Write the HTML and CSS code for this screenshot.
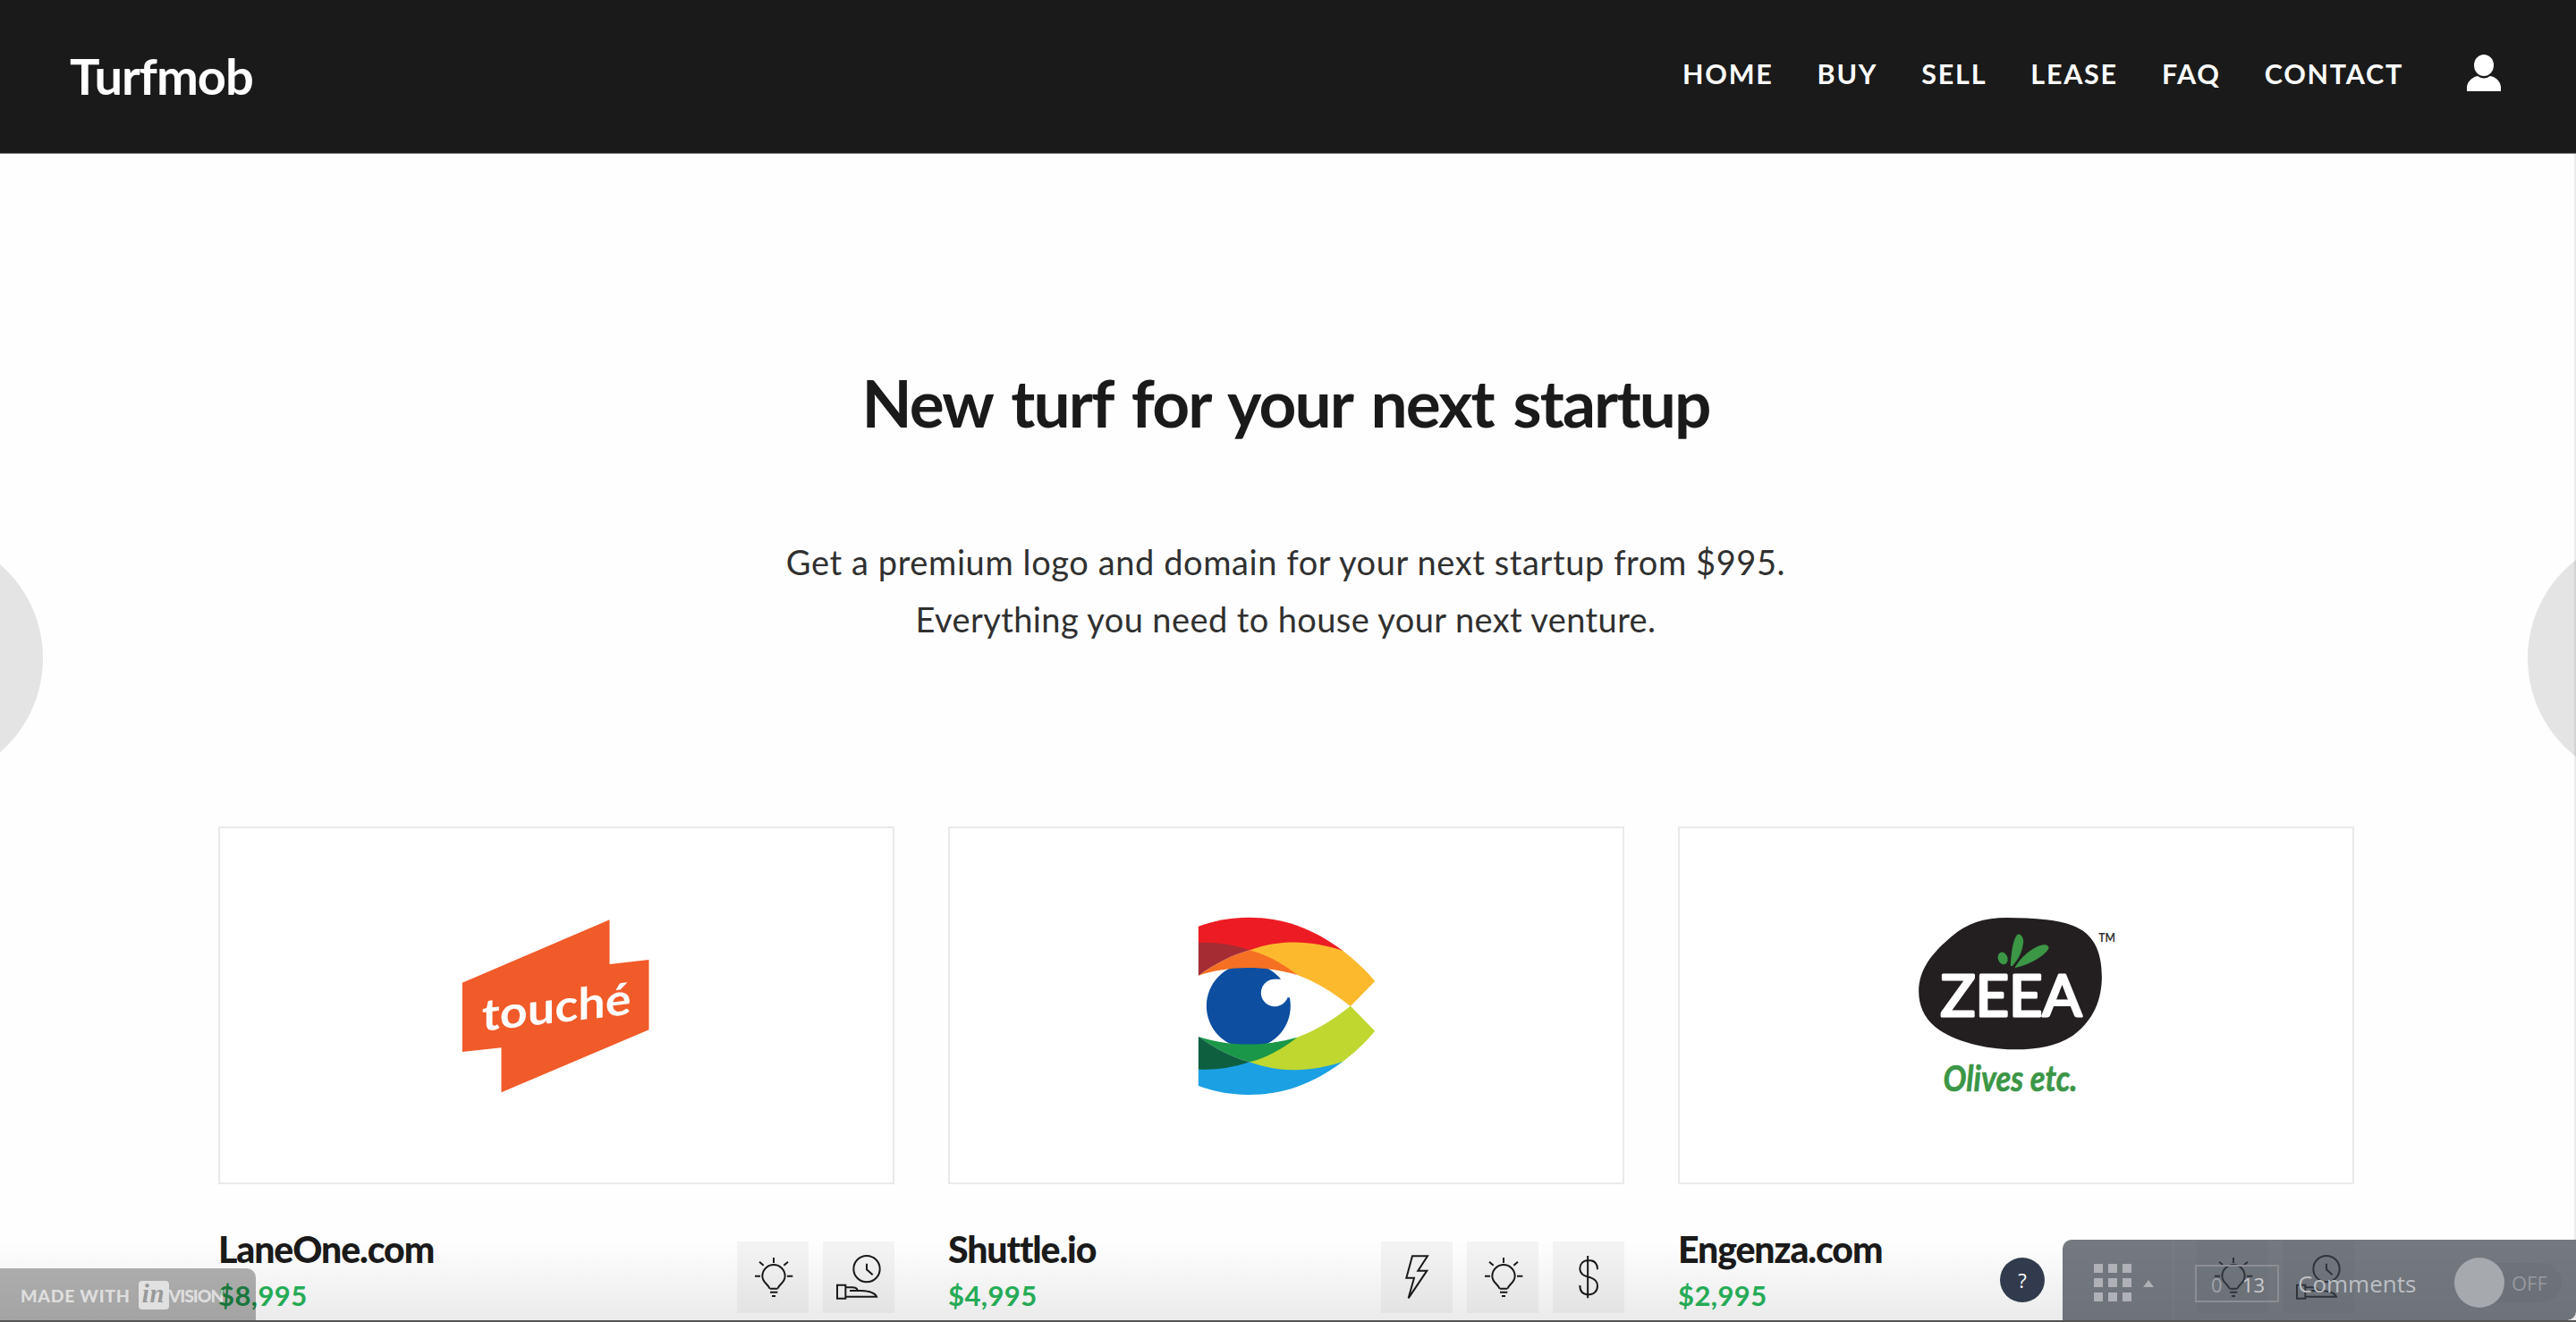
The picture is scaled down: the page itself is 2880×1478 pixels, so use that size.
FILE: index.html
```html
<!DOCTYPE html>
<html lang="en">
<head>
<meta charset="utf-8">
<title>Turfmob</title>
<link rel="stylesheet" href="styles.css">
</head>
<body>
<svg class="defs" aria-hidden="true">
  <symbol id="bulb" viewBox="0 0 240 240">
    <path d="M123 54v18M60 116h18M168 116h19M75 68l14 12M171 68l-14 12M110 158h26M111 170h25M117 183h12M109 158C107 145 85 138 85 116A38 38 0 0 1 161 116C161 138 139 145 137 158"/>
  </symbol>
  <symbol id="clock" viewBox="0 0 240 240">
    <circle cx="147" cy="92" r="44"/>
    <path d="M147 74v20l20 18M48 146h28v45H48zM76 154h22q14 0 18 8M90 165h38q45 2 52 20H76"/>
  </symbol>
  <symbol id="bolt" viewBox="0 0 240 240">
    <path d="M105 49H156L124 98H154L92 190L111 122H85Z"/>
  </symbol>
  <symbol id="dollar" viewBox="0 0 240 240">
    <path d="M117.500 48V190M150 94C150 72 137 63 120 63C102 63 91 75 91 91C91 108 105 116 120 119C138 123 150 132 150 149C150 167 137 178 120 178C102 178 91 167 91 147"/>
  </symbol>
</svg>

<header class="header">
  <a class="brand">Turfmob</a>
  <nav class="nav">
    <a>HOME</a><a>BUY</a><a>SELL</a><a>LEASE</a><a>FAQ</a><a>CONTACT</a>
    <svg class="user" viewBox="0 0 38 42"><ellipse cx="19" cy="12" rx="11" ry="12"/><path d="M0 41V36C1 29 7 25 12 24Q19 29 26 24C32 25 37 29 38 36V41Z"/></svg>
  </nav>
</header>

<main>
  <section class="hero">
    <h1>New turf for your next startup</h1>
    <p class="lead-a">Get a premium logo and domain for your next startup from $995.</p>
    <p class="lead-b">Everything you need to house your next venture.</p>
  </section>

  <section class="cards">
    <article class="card">
      <div class="thumb">
        <svg viewBox="7.5 -3 840 750">
          <path fill="#f15a29" d="M112 296L606 85V234L738 219V454L243 664V514L112 528Z"/>
          <text class="touche" transform="translate(178 458) skewY(-6.500)" textLength="500" lengthAdjust="spacingAndGlyphs">touché</text>
        </svg>
      </div>
      <div class="meta">
        <div><h2>LaneOne.com</h2><span class="price">$8,995</span></div>
        <ul class="tags"><li><svg><use href="#bulb"/></svg></li><li><svg><use href="#clock"/></svg></li></ul>
      </div>
    </article>

    <article class="card">
      <div class="thumb">
        <svg viewBox="-7.5 -3 840 750">
          <circle cx="286" cy="374" r="141" fill="#0d4ea0"/>
          <circle cx="374" cy="330" r="46" fill="#fff"/>
          <path fill="#fff" d="M374 284L440 284V346L418 346Z"/>
          <path fill="#ed1c24" d="M118 107C170 87 230 77 286 77C400 77 500 112 602 188L450 200L290 187L118 162Z"/>
          <path fill="#fdb92e" d="M290 187C400 145 510 158 602 188Q665 236 710 291L628 375C565 325 510 292 450 270Z"/>
          <path fill="#f57022" d="M118 272C175 232 230 203 290 187C350 203 400 232 450 270C335 238 225 238 118 272Z"/>
          <path fill="#a52c33" d="M118 162Q205 158 290 187C230 203 175 232 118 272Z"/>
          <g transform="matrix(1 0 0 -1 0 749)">
            <path fill="#1ba1e3" d="M118 107C170 87 230 77 286 77C400 77 500 112 602 188L450 200L290 187L118 162Z"/>
            <path fill="#bfd72f" d="M290 187C400 145 510 158 602 188Q665 236 710 291L628 375C565 325 510 292 450 270Z"/>
            <path fill="#1a9748" d="M118 272C175 232 230 203 290 187C350 203 400 232 450 270C335 238 225 238 118 272Z"/>
            <path fill="#0d5f40" d="M118 162Q205 158 290 187C230 203 175 232 118 272Z"/>
          </g>
        </svg>
      </div>
      <div class="meta">
        <div><h2>Shuttle.io</h2><span class="price">$4,995</span></div>
        <ul class="tags"><li><svg><use href="#bolt"/></svg></li><li><svg><use href="#bulb"/></svg></li><li><svg><use href="#dollar"/></svg></li></ul>
      </div>
    </article>

    <article class="card">
      <div class="thumb">
        <svg viewBox="10.5 -3 840 750">
          <path fill="#231f20" d="M104 325C104 250 150 195 215 140C265 98 320 78 400 78C480 79 560 82 620 104C690 130 720 190 718 285C715 370 680 430 620 474C570 508 500 521 420 520C330 520 220 493 160 445C120 412 104 370 104 325Z"/>
          <g fill="#3b9646">
            <path d="M412 240C413 200 420 155 432 138C442 126 455 140 455 160C452 195 435 222 418 240Z"/>
            <path d="M426 247C440 218 480 178 520 169C536 167 545 175 537 186C515 215 470 236 426 247Z"/>
            <ellipse cx="386" cy="214" rx="16" ry="21" transform="rotate(-20 386 214)"/>
          </g>
          <text class="zeea" x="177" y="408" textLength="474" lengthAdjust="spacingAndGlyphs">ZEEA</text>
          <text class="olives" x="186" y="660" textLength="450" lengthAdjust="spacingAndGlyphs">Olives etc.</text>
          <text class="tm" x="707" y="160" textLength="56" lengthAdjust="spacingAndGlyphs">TM</text>
        </svg>
      </div>
      <div class="meta">
        <div><h2>Engenza.com</h2><span class="price">$2,995</span></div>
        <ul class="tags"><li><svg><use href="#bulb"/></svg></li><li><svg><use href="#clock"/></svg></li></ul>
      </div>
    </article>
  </section>
</main>

<div class="edge edge-left"></div>
<div class="edge edge-right"></div>
<div class="shade"></div>

<div class="badge"><span>MADE WITH</span><b class="in">in</b><span class="vision">VISION</span></div>

<div class="help">?</div>
<div class="toolbar">
  <div class="pages"><div class="squares"><i></i><i></i><i></i><i></i><i></i><i></i><i></i><i></i><i></i></div><i class="caret"></i></div>
  <div class="counter"><span>0</span><span class="total">13</span></div>
  <div class="comments">Comments</div>
  <div class="toggle"><i></i><span>OFF</span></div>
</div>
<div class="scroll"></div>
<div class="base"></div>
</body>
</html>
```
FILE: styles.css
```css
* { box-sizing: border-box; }
body {
  margin: 0;
  position: relative;
  width: 2880px;
  height: 1478px;
  overflow: hidden;
  background: #fefefe;
  color: #1a1a1a;
  font-family: Lato, "Open Sans", sans-serif;
}
h1, h2, p, ul { margin: 0; padding: 0; }
.defs { position: absolute; width: 0; height: 0; }

.header {
  height: 172px;
  padding: 0 84px 0 78px;
  display: flex;
  justify-content: space-between;
  align-items: flex-start;
  background: #1a1a1a;
  border-bottom: 1px solid #777;
  color: #fff;
}
.brand { padding-top: 50px; font-size: 56px; line-height: 70px; font-weight: 700; letter-spacing: -1px; }
.nav { display: flex; gap: 49px; padding-top: 60px; line-height: 44px; font-size: 30.5px; font-weight: 700; letter-spacing: 1.75px; }
.user { width: 38px; height: 42px; margin: 1px 0 0 22px; fill: #fff; }

.hero { height: 752px; padding: 233px 5px 0 0; text-align: center; }
h1 { font-size: 73px; line-height: 90px; font-weight: 700; letter-spacing: -1.9px; word-spacing: 6px; white-space: nowrap; }
.hero p { font-size: 38px; line-height: 64px; letter-spacing: .6px; color: #303030; white-space: nowrap; }
.hero .lead-a { margin-top: 101px; }
.hero .lead-b { letter-spacing: .4px; }

.cards { display: grid; grid-template-columns: repeat(3, 756px); gap: 60px; padding-left: 244px; }
.thumb { height: 400px; border: 2px solid #e9e9e9; display: flex; align-items: center; justify-content: center; background: #fff; }
.thumb svg { width: 280px; height: 250px; }
.touche { font: 700 148px Lato, sans-serif; fill: #fff; }
.zeea { font: 400 190px Lato, sans-serif; fill: #fff; stroke: #fff; stroke-width: 9px; stroke-linejoin: round; }
.olives { font: italic 700 118px Lato, sans-serif; fill: #3b9646; stroke: #3b9646; stroke-width: 2px; stroke-linejoin: round; }
.tm { font: 700 37px Lato, sans-serif; fill: #333; }

.meta { display: flex; justify-content: space-between; height: 154px; }
.meta h2 { margin-top: 48px; font-size: 41px; line-height: 50px; font-weight: 900; letter-spacing: -1.1px; }
.price { display: block; margin-top: 6px; font-size: 31px; line-height: 40px; font-weight: 700; letter-spacing: .4px; color: #27b45b; }
.tags { display: flex; gap: 16px; margin-top: 64px; list-style: none; }
.tags li { width: 80px; height: 80px; background: #f4f4f4; }
.tags svg { display: block; width: 80px; height: 80px; fill: none; stroke: #1a1a1a; stroke-width: 6px; }

.edge { position: absolute; top: 597px; height: 278px; }
.edge-left { left: 0; width: 48px; background: radial-gradient(circle at -91px 139px, #e4e4e4 138.5px, transparent 139.5px); }
.edge-right { right: 0; width: 54px; background: radial-gradient(circle at 139px 139px, #e4e4e4 138.5px, transparent 139.5px); }
.shade { position: absolute; left: 0; right: 0; bottom: 0; height: 90px; background: linear-gradient(rgba(0,0,0,0), rgba(0,0,0,.08)); }

.badge {
  position: absolute; left: 0; bottom: 2px; width: 286px; height: 58px;
  padding: 2px 0 0 23px; display: flex; align-items: center;
  border-radius: 0 10px 0 0; background: rgba(0,0,0,.3);
  color: rgba(255,255,255,.65); font-size: 19.5px; font-weight: 900; letter-spacing: .7px; white-space: nowrap;
}
.in {
  width: 34px; height: 32px; margin-left: 9px; border-radius: 4px; background: rgba(255,255,255,.65);
  color: #999; font: italic 700 29px/29px "Liberation Serif", serif; text-align: center;
}
.vision { letter-spacing: -1px; }

.help {
  position: absolute; left: 2236px; top: 1406px; width: 50px; height: 50px; border-radius: 50%;
  background: #313b4d; color: #fff; font: 22px/50px "Open Sans", sans-serif; text-align: center;
}
.toolbar {
  position: absolute; left: 2306px; top: 1386px; width: 574px; height: 90px;
  display: flex; border-radius: 10px 0 10px 0; background: rgba(57,62,73,.7);
  font-family: "Open Sans", sans-serif; color: #bcbfc3;
}
.pages { width: 124px; padding: 27px 0 0 35px; display: flex; gap: 13px; border-right: 1px solid rgba(255,255,255,.06); }
.squares { display: grid; grid-template-columns: repeat(3, 10px); grid-auto-rows: 10px; gap: 6px; height: 42px; }
.squares i { background: #afb1b6; }
.caret { width: 0; height: 0; margin-top: 18px; border: 6px solid transparent; border-top: 0; border-bottom: 8px solid #afb1b6; }
.counter {
  width: 94px; height: 42px; margin: 28px 0 0 24px; padding: 0 14px 0 16px; border: 2px solid #8c8e91;
  display: flex; justify-content: space-between; font-size: 22px; line-height: 40px;
}
.counter span { color: #a0a2a6; }
.counter .total { color: #c9cbce; }
.comments { width: 174px; margin-left: 21px; padding-top: 30px; font-size: 26px; line-height: 38px; }
.toggle { width: 120px; height: 44px; margin: 26px 0 0 1px; border-radius: 22px; display: flex; background: rgba(0,0,0,.03); color: #989a9d; font-size: 22px; line-height: 44px; }
.toggle i { width: 56px; height: 56px; margin: -6px 8px 0 0; border-radius: 50%; background: #a6a9ae; }
.scroll { position: absolute; right: 0; top: 172px; bottom: 92px; width: 2px; background: rgba(0,0,0,.08); }
.base { position: absolute; left: 0; right: 0; bottom: 0; height: 2px; background: #555; }
```
